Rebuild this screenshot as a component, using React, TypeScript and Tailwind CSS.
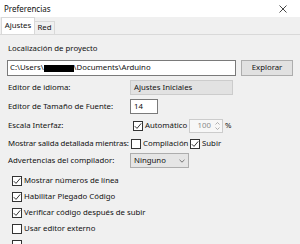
import React from "react";

function Box({ checked, className = "" }: { checked?: boolean; className?: string }) {
  return (
    <span className={`shrink-0 w-[10px] h-[10px] border border-[#333333] bg-white flex items-center justify-center ${className}`}>
      {checked && (
        <svg width="8" height="8" viewBox="0 0 8 8">
          <path d="M0.8 4.2 L3 6.4 L7.2 1.4" fill="none" stroke="#333333" strokeWidth="1" />
        </svg>
      )}
    </span>
  );
}

function CheckRow({ label, checked }: { label?: string; checked?: boolean }) {
  return (
    <div className="h-[16px] flex items-center shrink-0">
      <Box checked={checked} />
      {label && <span className="ml-[2px] whitespace-nowrap">{label}</span>}
    </div>
  );
}

export default function App() {
  return (
    <div className="w-[300px] h-[244px] overflow-hidden bg-[#f0f0f0] text-[7.8px] leading-none text-[#111111] flex flex-col font-['Noto_Sans',sans-serif]">
      <div className="h-[17px] shrink-0 bg-white flex items-center justify-between pl-[4px] pr-[13px]">
        <span className="text-[8px]">Preferencias</span>
        <svg width="8" height="8" viewBox="0 0 8 8">
          <path d="M0.5 0.5 L7.5 7.5 M7.5 0.5 L0.5 7.5" stroke="#333333" strokeWidth="0.9" />
        </svg>
      </div>
      <div className="h-[17px] shrink-0 flex items-end pl-[1px]">
        <div className="w-[34px] h-[17px] bg-white border border-b-0 border-[#d9d9d9] flex items-center justify-center">
          Ajustes
        </div>
        <div className="w-[20px] h-[13px] bg-[#f0f0f0] border border-l-0 border-b-0 border-[#d9d9d9] flex items-center justify-center">
          Red
        </div>
      </div>
      <div className="flex-1 flex flex-col pl-[7px] pt-[8px] border-t border-[#d9d9d9]">
        <div className="h-[12px] flex items-center pl-[1px]">Localización de proyecto</div>
        <div className="mt-[5px] h-[16px] flex shrink-0">
          <div className="w-[229px] h-[16px] border border-[#7a7a7a] bg-white flex items-center pl-[2px] whitespace-nowrap">
            <span>C:\Users\</span>
            <span className="w-[30px] h-[7px] bg-black" />
            <span>\Documents\Arduino</span>
          </div>
          <div className="ml-[5px] w-[52px] h-[16px] bg-[#e1e1e1] border border-[#adadad] flex items-center justify-center">
            Explorar
          </div>
        </div>
        <div className="mt-[4px] h-[15px] flex items-center shrink-0">
          <span className="w-[123px] pl-[1px] whitespace-nowrap">Editor de idioma:</span>
          <div className="w-[103px] h-[15px] bg-[#e2e2e2] border border-[#cccccc] flex items-center pl-[3px]">
            Ajustes Iniciales
          </div>
        </div>
        <div className="mt-[4px] h-[15px] flex items-center shrink-0">
          <span className="w-[123px] pl-[1px] whitespace-nowrap">Editor de Tamaño de Fuente:</span>
          <div className="w-[28px] h-[15px] bg-white border border-[#7a7a7a] flex items-center pl-[3px]">14</div>
        </div>
        <div className="mt-[5px] h-[14px] flex items-center shrink-0">
          <span className="w-[123px] pl-[1px] whitespace-nowrap">Escala Interfaz:</span>
          <Box checked className="ml-[3px]" />
          <span className="ml-[2px] w-[44px]">Automático</span>
          <div className="w-[34px] h-[14px] bg-[#f7f7f7] border border-[#cccccc] flex items-center justify-end pr-[1px]">
            <span className="text-[#8a8a8a]">100</span>
            <div className="ml-[3px] w-[7px] h-[12px] flex flex-col items-center justify-center gap-[2px]">
              <svg width="5" height="3" viewBox="0 0 5 3"><path d="M0.5 2.5 L2.5 0.5 L4.5 2.5" fill="none" stroke="#9a9a9a" strokeWidth="0.8" /></svg>
              <svg width="5" height="3" viewBox="0 0 5 3"><path d="M0.5 0.5 L2.5 2.5 L4.5 0.5" fill="none" stroke="#9a9a9a" strokeWidth="0.8" /></svg>
            </div>
          </div>
          <span className="ml-[2px]">%</span>
        </div>
        <div className="mt-[5px] h-[12px] flex items-center shrink-0">
          <span className="w-[123px] pl-[1px] whitespace-nowrap tracking-[-0.12px]">Mostrar salida detallada mientras:</span>
          <Box className="ml-[1px]" />
          <span className="ml-[2px] w-[47px]">Compilación</span>
          <Box checked />
          <span className="ml-[2px]">Subir</span>
        </div>
        <div className="mt-[3px] h-[15px] flex items-center shrink-0">
          <span className="w-[123px] pl-[1px] whitespace-nowrap">Advertencias del compilador:</span>
          <div className="w-[59px] h-[15px] bg-[#e5e5e5] border border-[#adadad] flex items-center justify-between pl-[3px] pr-[3px]">
            <span>Ninguno</span>
            <svg width="6" height="4" viewBox="0 0 6 4"><path d="M0.5 0.8 L3 3.2 L5.5 0.8" fill="none" stroke="#555555" strokeWidth="0.8" /></svg>
          </div>
        </div>
        <div className="mt-[5px] pl-[5px] flex flex-col">
          <CheckRow label="Mostrar números de línea" checked />
          <CheckRow label="Habilitar Plegado Código" checked />
          <CheckRow label="Verificar código después de subir" checked />
          <CheckRow label="Usar editor externo" />
          <CheckRow />
        </div>
      </div>
    </div>
  );
}
